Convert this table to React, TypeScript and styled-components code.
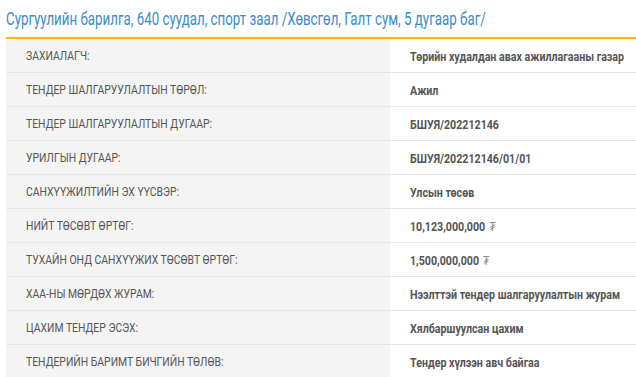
import styled, { createGlobalStyle } from 'styled-components';

const GlobalStyle = createGlobalStyle`
  html, body {
    margin: 0;
    padding: 0;
    background: #ffffff;
  }
  body {
    font-family: Roboto, "Liberation Sans", sans-serif;
  }
`;

const Page = styled.div`
  padding-left: 6px;
  width: 630px;
`;

const Title = styled.h1`
  margin: 0;
  height: 37px;
  display: flex;
  align-items: center;
  font-family: Roboto, "Liberation Sans", sans-serif;
  font-weight: 400;
  font-size: 18.5px;
  color: #3a8cc6;
  white-space: nowrap;
`;

// the reference font is a condensed face we don't have, so squeeze the text
const Narrow = styled.span<{ $scale: number }>`
  display: inline-block;
  white-space: nowrap;
  transform: scaleX(${(p) => p.$scale});
  transform-origin: left center;
`;

const Table = styled.div`
  border-top: 2px solid #f7b900;
  display: flex;
  flex-direction: column;
`;

const Row = styled.div`
  display: grid;
  grid-template-columns: 384px 1fr;
  height: 33px;
  border-bottom: 1px solid #e6e6e6;
`;

const Label = styled.div`
  background: #f4f4f4;
  padding-left: 20px;
  display: flex;
  align-items: center;
  font-size: 13px;
  color: #555555;
  text-transform: uppercase;
  overflow: hidden;
`;

const Value = styled.div`
  padding-left: 20px;
  display: flex;
  align-items: center;
  font-weight: 700;
  font-size: 13.5px;
  color: #555555;
  overflow: hidden;
`;

const Currency = styled.span`
  margin-left: 5px;
  font-weight: 400;
  color: #8a8a8a;
`;

const rows: { label: string; value: string; money?: boolean }[] = [
  { label: 'Захиалагч:', value: 'Төрийн худалдан авах ажиллагааны газар' },
  { label: 'Тендер шалгаруулалтын төрөл:', value: 'Ажил' },
  { label: 'Тендер шалгаруулалтын дугаар:', value: 'БШУЯ/202212146' },
  { label: 'Урилгын дугаар:', value: 'БШУЯ/202212146/01/01' },
  { label: 'Санхүүжилтийн эх үүсвэр:', value: 'Улсын төсөв' },
  { label: 'Нийт төсөвт өртөг:', value: '10,123,000,000', money: true },
  { label: 'Тухайн онд санхүүжих төсөвт өртөг:', value: '1,500,000,000', money: true },
  { label: 'ХАА-ны мөрдөх журам:', value: 'Нээлттэй тендер шалгаруулалтын журам' },
  { label: 'Цахим тендер эсэх:', value: 'Хялбаршуулсан цахим' },
  { label: 'Тендерийн баримт бичгийн төлөв:', value: 'Тендер хүлээн авч байгаа' },
];

const App = () => (
  <>
    <GlobalStyle />
    <Page>
      <Title>
        <Narrow $scale={0.72}>
          Сургуулийн барилга, 640 суудал, спорт заал /Хөвсгөл, Галт сум, 5 дугаар баг/
        </Narrow>
      </Title>
      <Table>
        {rows.map((row, i) => (
          <Row key={i}>
            <Label>
              <Narrow $scale={0.8}>{row.label}</Narrow>
            </Label>
            <Value>
              <Narrow $scale={0.79}>
                {row.value}
                {row.money && <Currency>₮</Currency>}
              </Narrow>
            </Value>
          </Row>
        ))}
      </Table>
    </Page>
  </>
);

export default App;
